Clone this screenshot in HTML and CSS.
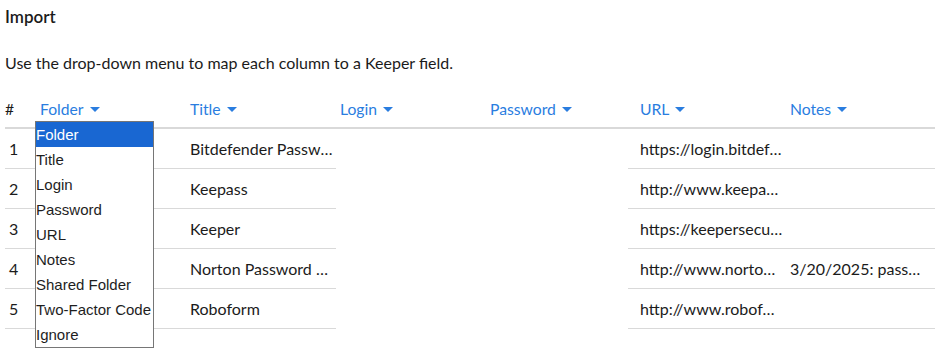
FILE: index.html
```html
<!DOCTYPE html>
<html>
<head>
<meta charset="utf-8">
<link rel="stylesheet" href="styles.css">
</head>
<body>
<div class="page">
  <h1 class="title">Import</h1>
  <p class="desc">Use the drop-down menu to map each column to a Keeper field.</p>
  <div class="table">
    <div class="head">
      <div class="hcell num">#</div>
      <div class="hcell folder-h"><span class="hlabel">Folder</span><span class="caret"></span>
        <div class="listbox">
          <div class="opt sel">Folder</div>
          <div class="opt">Title</div>
          <div class="opt">Login</div>
          <div class="opt">Password</div>
          <div class="opt">URL</div>
          <div class="opt">Notes</div>
          <div class="opt">Shared Folder</div>
          <div class="opt">Two-Factor Code</div>
          <div class="opt">Ignore</div>
        </div>
      </div>
      <div class="hcell"><span class="hlabel">Title</span><span class="caret"></span></div>
      <div class="hcell"><span class="hlabel">Login</span><span class="caret"></span></div>
      <div class="hcell"><span class="hlabel">Password</span><span class="caret"></span></div>
      <div class="hcell"><span class="hlabel">URL</span><span class="caret"></span></div>
      <div class="hcell"><span class="hlabel">Notes</span><span class="caret"></span></div>
    </div>
    <div class="row">
      <div class="cell c-num">1</div><div class="cell c-b"></div><div class="cell c-title">Bitdefender Password Manager</div><div class="cell c-empty"></div><div class="cell c-empty"></div><div class="cell c-url">https://login.bitdefender.com</div><div class="cell c-notes"></div>
    </div>
    <div class="row">
      <div class="cell c-num">2</div><div class="cell c-b"></div><div class="cell c-title">Keepass</div><div class="cell c-empty"></div><div class="cell c-empty"></div><div class="cell c-url">http://www.keepass.info</div><div class="cell c-notes"></div>
    </div>
    <div class="row">
      <div class="cell c-num">3</div><div class="cell c-b"></div><div class="cell c-title">Keeper</div><div class="cell c-empty"></div><div class="cell c-empty"></div><div class="cell c-url">https://keepersecurity.com</div><div class="cell c-notes"></div>
    </div>
    <div class="row">
      <div class="cell c-num">4</div><div class="cell c-b"></div><div class="cell c-title">Norton Password Manager</div><div class="cell c-empty"></div><div class="cell c-empty"></div><div class="cell c-url">http://www.norton.com</div><div class="cell c-notes">3/20/2025: password imported</div>
    </div>
    <div class="row">
      <div class="cell c-num">5</div><div class="cell c-b"></div><div class="cell c-title">Roboform</div><div class="cell c-empty"></div><div class="cell c-empty"></div><div class="cell c-url">http://www.roboform.com</div><div class="cell c-notes"></div>
    </div>
  </div>
</div>
</body>
</html>
```
FILE: styles.css
```css
* { box-sizing: border-box; }
html, body { margin: 0; padding: 0; background: #fff; }
body {
  font-family: "Lato", "Noto Sans", sans-serif;
  color: #1b1b1b;
}
.page { padding: 5px 8px 0 5px; min-height: 358px; }
.title {
  margin: 0;
  font-size: 17px;
  font-weight: 600;
  line-height: 24px;
}
.desc {
  margin: 24px 0 0 0;
  font-size: 16px;
  line-height: 20px;
}
.table { margin-top: 26px; width: 930px; }
.head {
  display: grid;
  grid-template-columns: 30px repeat(6, 150px);
  border-bottom: 2px solid #d9d9d9;
}
.hcell {
  position: relative;
  padding: 0 0 8px 5px;
  font-size: 15.7px;
  line-height: 20px;
  color: #2a7ddf;
  display: flex;
  align-items: center;
}
.hcell.num { padding-left: 0; color: #1b1b1b; }
.caret {
  display: inline-block;
  width: 0; height: 0;
  margin-left: 6px;
  border-left: 5px solid transparent;
  border-right: 5px solid transparent;
  border-top: 5px solid #2a7ddf;
}
.listbox {
  position: absolute;
  left: 0;
  top: 22px;
  width: 119px;
  border: 1px solid #767676;
  background: #fff;
  z-index: 2;
}
.opt {
  font-family: "Liberation Sans", Arial, sans-serif;
  font-size: 15px;
  line-height: 25px;
  height: 25px;
  padding-left: 0;
  color: #1e1e1e;
  white-space: nowrap;
}
.opt.sel { background: #1967d2; color: #fff; }
.row {
  display: grid;
  grid-template-columns: 30px 150px 151px 149px 143px 157px 150px;
  height: 40px;
}
.cell {
  font-size: 16px;
  line-height: 20px;
  padding-top: 10px;
  white-space: nowrap;
  overflow: hidden;
  text-overflow: ellipsis;
  border-bottom: 1px solid #d9d9d9;
}
.c-num { padding-left: 4px; }
.c-title { padding-left: 5px; padding-right: 0; }
.c-empty { border-bottom: none; }
.c-url { padding-left: 12px; padding-right: 2px; }
.c-notes { padding-left: 5px; padding-right: 6px; }
```
